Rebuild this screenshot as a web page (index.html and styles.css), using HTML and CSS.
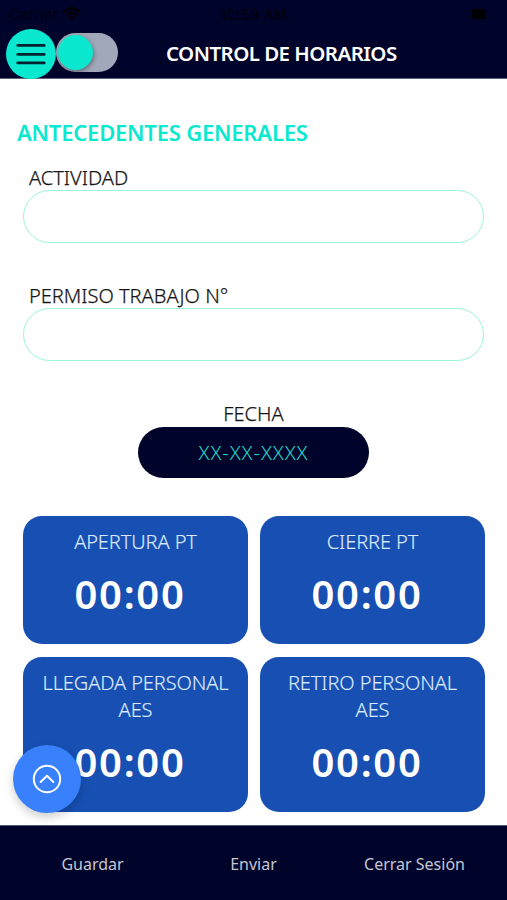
FILE: index.html
```html
<!DOCTYPE html>
<html lang="es">
<head>
  <meta charset="utf-8">
  <meta name="viewport" content="width=device-width, initial-scale=1">
  <title>Control de Horarios</title>
  <link rel="stylesheet" href="styles.css">
</head>
<body>
  <header class="header">
    <div class="status-bar">
      <div class="carrier">
        <span>Carrier</span>
        <svg width="18" height="14" viewBox="0 0 18 14">
          <path d="M1 5 Q9 -2 17 5 M4 8 Q9 4 14 8" fill="none" stroke="#000" stroke-width="2.4"/>
          <path d="M6 10 Q9 8 12 10 L9 13.5 Z"/>
        </svg>
      </div>
      <span class="clock">12:59 AM</span>
      <div class="battery"><span></span></div>
    </div>
    <div class="toolbar">
      <button class="menu-btn" aria-label="Menú">
        <svg width="30" height="22" viewBox="0 0 30 22">
          <path d="M1.8 2.4H28.2M1.8 11.4H28.2M1.8 19.9H28.2" fill="none" stroke="#03222f" stroke-width="2.8" stroke-linecap="round"/>
        </svg>
      </button>
      <div class="toggle"><span class="knob"></span></div>
      <h1>CONTROL DE HORARIOS</h1>
    </div>
  </header>

  <main class="content">
    <h2>ANTECEDENTES GENERALES</h2>

    <div class="field">
      <label for="actividad">ACTIVIDAD</label>
      <input id="actividad" type="text">
    </div>
    <div class="field">
      <label for="permiso">PERMISO TRABAJO N°</label>
      <input id="permiso" type="text">
    </div>

    <div class="date">
      <span class="date-label">FECHA</span>
      <button class="date-btn">XX-XX-XXXX</button>
    </div>

    <div class="cards">
      <div class="card">
        <p>APERTURA PT</p>
        <strong>00:00</strong>
      </div>
      <div class="card">
        <p>CIERRE PT</p>
        <strong>00:00</strong>
      </div>
      <div class="card">
        <p>LLEGADA PERSONAL AES</p>
        <strong>00:00</strong>
      </div>
      <div class="card">
        <p>RETIRO PERSONAL AES</p>
        <strong>00:00</strong>
      </div>
    </div>
  </main>

  <button class="fab" aria-label="Subir">
    <svg width="30" height="30" viewBox="0 0 30 30">
      <circle cx="15" cy="15" r="13.2"/>
      <path d="M8.6 18 L15 11.8 L21.4 18"/>
    </svg>
  </button>

  <footer class="footer">
    <a>Guardar</a>
    <a>Enviar</a>
    <a>Cerrar Sesión</a>
  </footer>
</body>
</html>
```
FILE: styles.css
```css
* {
  box-sizing: border-box;
}

body {
  display: flex;
  flex-direction: column;
  height: 900px;
  margin: 0;
  overflow: hidden;
  background-color: #fff;
  color: #151515;
  font-family: "Noto Sans", sans-serif;
}

button {
  padding: 0;
  border: none;
  font-family: inherit;
}

.header {
  height: 79px;
  background-color: #00042b;
  border-bottom: 1px solid #60627d;
}

.status-bar {
  display: grid;
  grid-template-columns: 1fr auto 1fr;
  align-items: center;
  height: 28px;
  padding: 0 21px 0 9px;
  color: #000010;
  font: 15px Inter, sans-serif;
}

.carrier {
  display: flex;
  align-items: center;
  gap: 5px;
}

.clock {
  padding-left: 13px;
  font-weight: 600;
  font-size: 14px;
  letter-spacing: 0.5px;
}

.battery {
  justify-self: end;
}

.battery span {
  display: block;
  width: 14px;
  height: 10px;
  border-radius: 2px;
  background-color: #000;
}

.toolbar {
  display: flex;
  align-items: center;
  height: 51px;
  padding-left: 6px;
}

.menu-btn {
  display: flex;
  align-items: center;
  justify-content: center;
  width: 50px;
  height: 50px;
  border-radius: 50%;
  background-color: #0ae8cf;
}

.toggle {
  width: 62px;
  height: 39px;
  margin-bottom: 3px;
  padding: 2px;
  border-radius: 20px;
  background-color: #a0a8b9;
}

.knob {
  display: block;
  width: 35px;
  height: 35px;
  border-radius: 50%;
  background-color: #0ae8cf;
  box-shadow: 1px 2px 4px rgba(0, 0, 0, 0.35);
}

h1 {
  margin: -2px 0 0 48px;
  color: #fff;
  font-size: 20.5px;
  font-weight: 600;
  letter-spacing: -0.55px;
  white-space: nowrap;
}

.content {
  height: 746px;
  padding: 38px 23px 0;
}

h2 {
  margin: 0 0 19px -6px;
  color: #0ae8cf;
  font-size: 22px;
  font-weight: 600;
  letter-spacing: -0.2px;
  line-height: 30px;
  white-space: nowrap;
}

.field {
  display: flex;
  flex-direction: column;
  height: 118px;
}

.field label {
  height: 24px;
  padding-left: 6px;
  font-size: 20px;
  font-weight: 300;
  line-height: 24px;
  -webkit-text-stroke: 0.25px;
}

.field input {
  height: 53px;
  padding: 0 20px;
  border: 1px solid #9af3df;
  border-radius: 27px;
  background: none;
  font-size: 20px;
}

.date {
  display: flex;
  flex-direction: column;
  align-items: center;
}

.date-label {
  height: 25px;
  font-size: 20px;
  font-weight: 300;
  line-height: 23px;
  -webkit-text-stroke: 0.25px;
}

.date-btn {
  width: 231px;
  height: 51px;
  border-radius: 26px;
  background-color: #00042b;
  color: #20d9c8;
  font-size: 20px;
  font-weight: 300;
  letter-spacing: 0.95px;
}

.cards {
  display: grid;
  grid-template-columns: 225px 225px;
  grid-template-rows: 128px 155px;
  gap: 13px 12px;
  margin-top: 38px;
}

.card {
  display: flex;
  flex-direction: column;
  align-items: center;
  padding: 12px 12px 0;
  border-radius: 19px;
  background-color: #1750b2;
  color: #fff;
  text-align: center;
}

.card p {
  margin: 0;
  color: #dce9ff;
  font-size: 20px;
  font-weight: 300;
  letter-spacing: -0.1px;
  line-height: 27px;
  -webkit-text-stroke: 0.15px;
}

.card strong {
  padding-right: 11px;
  margin-top: 12px;
  font-size: 40px;
  font-weight: 600;
  letter-spacing: 1.7px;
  line-height: 54px;
}

.fab {
  position: fixed;
  left: 13px;
  top: 745px;
  display: flex;
  align-items: center;
  justify-content: center;
  width: 68px;
  height: 68px;
  border-radius: 50%;
  background-color: #3880fc;
  box-shadow: 0 4px 10px rgba(0, 0, 0, 0.2);
}

.fab svg {
  fill: none;
  stroke: #fff;
  stroke-width: 2;
  stroke-linecap: round;
  stroke-linejoin: round;
}

.footer {
  display: grid;
  grid-template-columns: repeat(3, 161px);
  justify-content: center;
  height: 75px;
  background-color: #00042b;
  border-top: 1px solid #55576d;
  color: #c5c6d2;
  font-size: 16px;
  line-height: 76px;
  text-align: center;
}
```
